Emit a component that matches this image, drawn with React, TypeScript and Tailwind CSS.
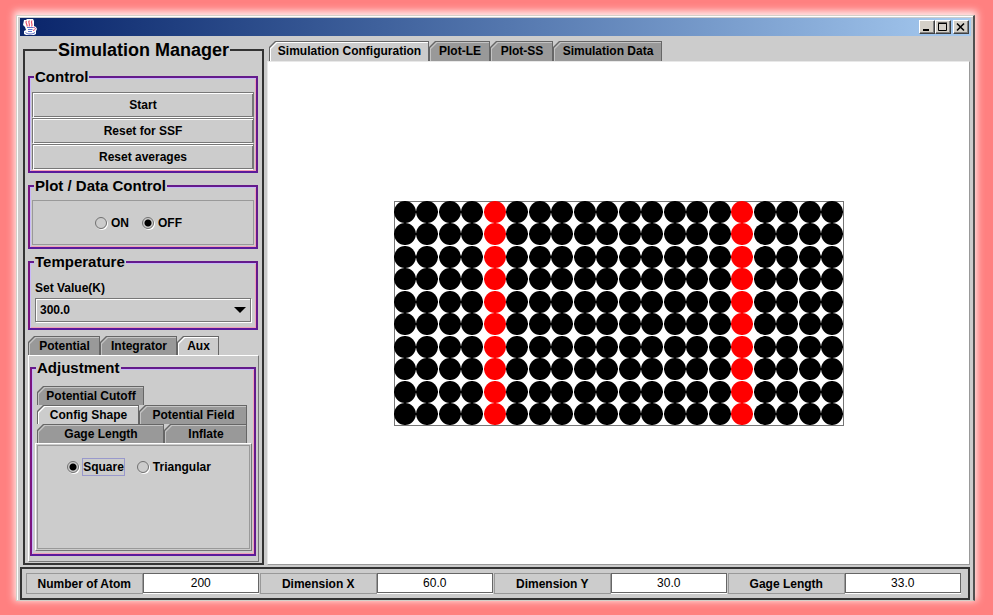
import type { ReactNode } from 'react';
import clsx from 'clsx';

const COLS = 20;
const ROWS = 10;
const PITCH = 22.5;
const GAGE_COLUMNS = [4, 15];

const readouts = [
    { id: 'atoms', label: 'Number of Atom', value: '200' },
    { id: 'dim-x', label: 'Dimension X', value: '60.0' },
    { id: 'dim-y', label: 'Dimension Y', value: '30.0' },
    { id: 'gage', label: 'Gage Length', value: '33.0' },
];

function JavaIcon() {
    return (
        <svg viewBox="0 0 16 17" className="w-4 h-[17px]" fill="none" aria-hidden="true">
            <path d="M2 1h2l1-1h6l1 2v5l2 1 1 2-1 2v3l-2 1H4l-2-1v-3l2-1-1-3-2-2z" fill="#fff" />
            <path d="M4.500 2c-2 2 1.500 3 .5 5.500M7.500 1.500c-2.500 2 1.500 3.500-.5 6M10 1.500c-2 2.500 1.500 3.500-.5 6" stroke="#e8506c" strokeWidth="1.200" />
            <path d="M5 8.500h6.500M6 10.500h4.500M6 12.500h4" stroke="#6478d0" />
            <path d="M11.500 8.500c2.500-.5 2.500 2.500-.5 3" stroke="#d84878" />
            <path d="M3.500 13.500c2 2 7 2 9.500 0" stroke="#5064c0" />
        </svg>
    );
}

function WindowButton({ label, children }: { label: string; children: ReactNode }) {
    return (
        <button
            type="button"
            aria-label={label}
            className="w-4 h-[14px] bg-[#d4d0c8] border border-t-white border-l-white border-r-[#404040] border-b-[#404040] shadow-[inset_-1px_-1px_#808080]"
        >
            <svg viewBox="0 0 14 12" className="w-[14px] h-3" fill="none" stroke="#000" aria-hidden="true">
                {children}
            </svg>
        </button>
    );
}

function Tab({ label, active, className }: { label: string; active?: boolean; className?: string }) {
    return (
        <button
            type="button"
            role="tab"
            aria-selected={!!active}
            className={clsx(
                'flex bg-[#666] pt-px px-px [clip-path:polygon(6px_0,100%_0,100%_100%,0_100%,0_6px)]',
                className
            )}
        >
            <span
                className={clsx(
                    'flex flex-1 self-stretch pt-px pl-px [clip-path:polygon(6px_0,100%_0,100%_100%,0_100%,0_6px)]',
                    active ? 'bg-white' : 'bg-[#c4c4c4]'
                )}
            >
                <span
                    className={clsx(
                        'flex flex-1 items-center justify-center pb-[2px] whitespace-nowrap [clip-path:polygon(6px_0,100%_0,100%_100%,0_100%,0_6px)]',
                        active ? 'bg-[#ccc]' : 'bg-[#999]'
                    )}
                >
                    {label}
                </span>
            </span>
        </button>
    );
}

function Group({ title, className, children }: { title: string; className?: string; children: ReactNode }) {
    return (
        <fieldset
            className={clsx(
                'min-w-0 px-[2px] border-2 border-t-[#641a8c] border-l-[#7a1480] border-r-[#641a8c] border-b-[#5a1a9c] shadow-[inset_1px_1px_#c8b8f8,inset_-1px_-1px_#f0a0b8]',
                className
            )}
        >
            <legend className="ml-[2px] px-px h-5 leading-5 text-[15px] bg-[#ccc]">{title}</legend>
            {children}
        </fieldset>
    );
}

function Radio({ name, label, checked, focused }: { name: string; label: string; checked?: boolean; focused?: boolean }) {
    return (
        <label className="flex items-center gap-[3px]">
            <input
                type="radio"
                name={name}
                defaultChecked={checked}
                className="appearance-none w-3 h-3 rounded-full border border-[#707070] shadow-[1px_1px_#fff] checked:bg-[radial-gradient(circle,#000_3px,transparent_4px)]"
            />
            <span className={clsx('border', focused ? 'border-[#9999cc]' : 'border-transparent')}>{label}</span>
        </label>
    );
}

function AtomLattice() {
    const atoms = [];
    for (let row = 0; row < ROWS; row++) {
        for (let col = 0; col < COLS; col++) {
            const x = Math.floor(col * PITCH) + 11;
            const y = Math.floor(row * PITCH) + 11;
            atoms.push(
                <g key={`${row}-${col}`} fill={GAGE_COLUMNS.includes(col) ? '#f00' : '#000'}>
                    <circle cx={x} cy={y} r={10.9} />
                    <path d={`M${x - 11} ${y - 1}h22v2h-22zM${x - 1} ${y - 11}h2v22h-2z`} />
                </g>
            );
        }
    }
    return (
        <svg width="450" height="225" viewBox="0 0 450 225" role="img" aria-label="Atom configuration">
            <rect x="0.5" y="0.5" width="449" height="224" fill="#fff" stroke="#777" />
            {atoms}
        </svg>
    );
}

export default function App() {
    return (
        <div className="min-h-screen flex flex-col bg-[#ff8080] pt-[15px] pl-4 pr-[18px] pb-[14px] font-['Liberation_Sans',Arial,sans-serif] text-xs leading-4 font-bold text-black">
            <div className="flex-1 flex flex-col bg-[#ccc] border border-[#d4d0c8] border-r-2 border-r-[#505050] shadow-[0_-2px_7px_2px_#ffe8e8]">
                <div className="flex-1 flex flex-col border-t border-l border-white pt-px pl-[2px] pr-[2px]">
                    {/* Title bar */}
                    <header className="h-[18px] flex items-center px-[2px] bg-linear-to-r from-[#0a246a] to-[#a6caf0]">
                        <JavaIcon />
                        <div className="ml-auto flex">
                            <WindowButton label="Minimize">
                                <path d="M3 9h6" strokeWidth="2" />
                            </WindowButton>
                            <WindowButton label="Maximize">
                                <path d="M2.500 2.500h8v7h-8zM2 2h9" />
                            </WindowButton>
                            <div className="ml-[2px] flex">
                                <WindowButton label="Close">
                                    <path d="M3 2.500l7 7M10 2.500l-7 7" strokeWidth="1.600" />
                                </WindowButton>
                            </div>
                        </div>
                    </header>

                    <div className="flex-1 flex gap-[3px] pt-[3px] pl-[3px]">
                        {/* Control column */}
                        <fieldset className="w-[241px] shrink-0 flex flex-col gap-[3px] border-2 border-[#333] px-[3px] pt-[6px] pb-px">
                            <legend className="mx-auto px-px h-[22px] leading-[22px] text-lg">Simulation Manager</legend>

                            <Group title="Control" className="mr-px pt-[5px] pb-px">
                                {['Start', 'Reset for SSF', 'Reset averages'].map((label) => (
                                    <button
                                        key={label}
                                        type="button"
                                        className="block w-full h-[26px] border border-[#777] border-b-white shadow-[inset_1px_1px_#fff,inset_-1px_-1px_#777]"
                                    >
                                        {label}
                                    </button>
                                ))}
                            </Group>

                            <Group title="Plot / Data Control" className="mr-px pt-1 pb-[2px]">
                                <div className="h-[45px] flex items-center justify-center gap-3 pr-2 border border-[#999]">
                                    <Radio name="plot" label="ON" />
                                    <Radio name="plot" label="OFF" checked />
                                </div>
                            </Group>

                            <Group title="Temperature" className="mr-px pt-2 pb-[6px]">
                                <label htmlFor="temperature" className="block ml-[3px]">
                                    Set Value(K)
                                </label>
                                <div className="relative mt-[2px] mx-[3px]">
                                    <select
                                        id="temperature"
                                        className="appearance-none block w-full h-6 px-1 border border-[#777] bg-[#ccc] shadow-[1px_1px_#fff,inset_1px_1px_#fff]"
                                    >
                                        <option>300.0</option>
                                    </select>
                                    <svg viewBox="0 0 12 6" className="absolute right-[5px] top-[9px] w-3 h-[6px] pointer-events-none">
                                        <path d="M0 0h12L6 6z" />
                                    </svg>
                                </div>
                            </Group>

                            <div className="flex-1 flex flex-col pt-[3px]">
                                <div role="tablist" className="flex h-[19px]">
                                    <Tab label="Potential" className="w-[72px]" />
                                    <Tab label="Integrator" className="w-[77px]" />
                                    <Tab label="Aux" active className="w-[42px]" />
                                </div>
                                <div className="flex-1 flex flex-col border border-t-white border-l-white border-r-[#777] border-b-[#777] pl-px pr-[2px] pt-[2px] pb-[5px]">
                                    <Group title="Adjustment" className="flex-1 flex flex-col pt-2 pb-[3px]">
                                        <div role="tablist" className="pl-[3px] pr-[5px]">
                                            <div className="flex h-[19px]">
                                                <Tab label="Potential Cutoff" className="w-[107px]" />
                                            </div>
                                            <div className="flex h-[19px]">
                                                <Tab label="Config Shape" active className="w-[102px]" />
                                                <Tab label="Potential Field" className="flex-1" />
                                            </div>
                                            <div className="flex h-[19px]">
                                                <Tab label="Gage Length" className="w-[127px]" />
                                                <Tab label="Inflate" className="flex-1" />
                                            </div>
                                        </div>
                                        <div className="flex-1 flex ml-px border border-t-white border-l-white border-r-[#777] border-b-[#777] p-px">
                                            <div className="flex-1 flex items-start justify-center gap-3 pr-2 border border-[#999] pt-3">
                                                <Radio name="shape" label="Square" checked focused />
                                                <Radio name="shape" label="Triangular" />
                                            </div>
                                        </div>
                                    </Group>
                                </div>
                            </div>
                        </fieldset>

                        {/* Plot area */}
                        <main className="flex-1 flex flex-col pt-[2px] pr-px">
                            <div role="tablist" className="flex h-5 pl-[2px]">
                                <Tab label="Simulation Configuration" active className="w-[160px]" />
                                <Tab label="Plot-LE" className="w-[61px]" />
                                <Tab label="Plot-SS" className="w-[63px]" />
                                <Tab label="Simulation Data" className="w-[109px]" />
                            </div>
                            <div className="flex-1 flex items-center justify-center bg-white border border-l-[#e8e8e8] border-t-[#e8e8e8] border-r-[#999] border-b-[#999]">
                                <AtomLattice />
                            </div>
                        </main>
                    </div>

                    {/* Readouts */}
                    <footer className="mt-[2px] mr-px grid grid-cols-4 border-2 border-[#333] pt-1 pr-[6px] pb-1 pl-1">
                        {readouts.map(({ id, label, value }) => (
                            <div key={id} className="flex h-[21px]">
                                <label
                                    htmlFor={id}
                                    className="flex-1 flex items-center justify-center border border-[#999]"
                                >
                                    {label}
                                </label>
                                <input
                                    id={id}
                                    defaultValue={value}
                                    className="flex-1 min-w-0 mr-px h-5 text-center font-normal bg-white border border-[#666] shadow-[0_1px_#fff]"
                                />
                            </div>
                        ))}
                    </footer>
                </div>
            </div>
        </div>
    );
}
